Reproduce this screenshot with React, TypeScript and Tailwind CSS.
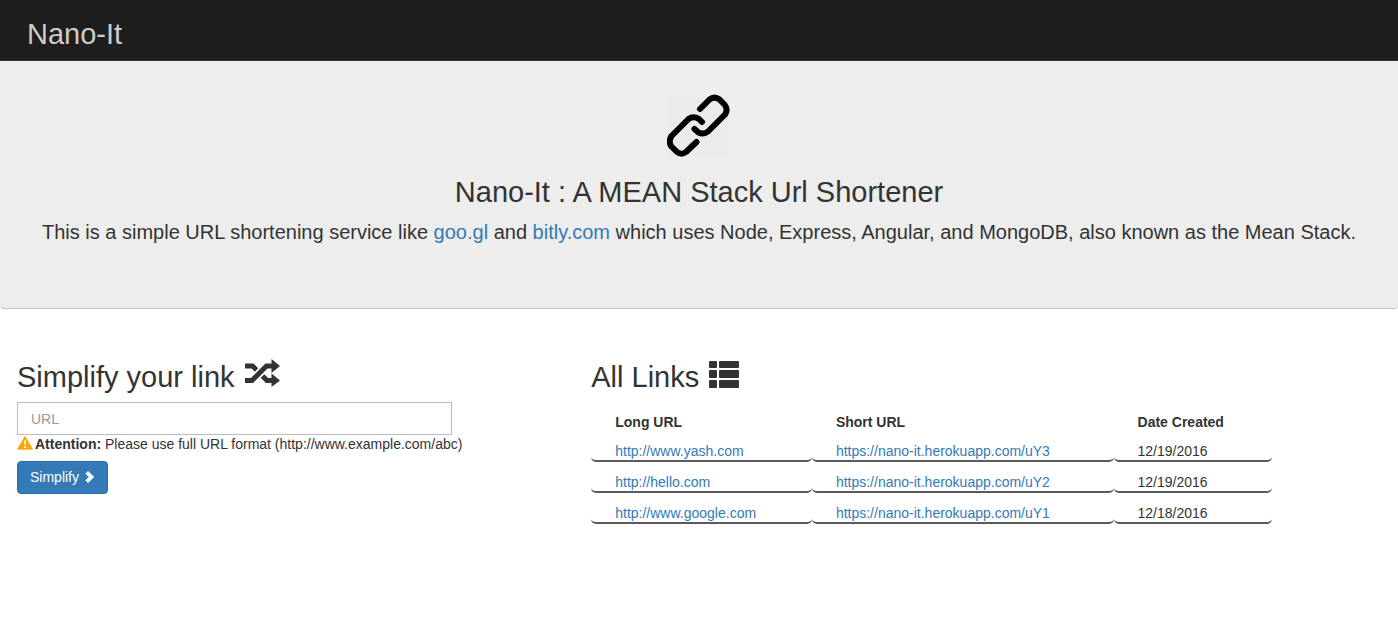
import React from "react";

type Link = { long: string; short: string; date: string };

const links: Link[] = [
  { long: "http://www.yash.com", short: "https://nano-it.herokuapp.com/uY3", date: "12/19/2016" },
  { long: "http://hello.com", short: "https://nano-it.herokuapp.com/uY2", date: "12/19/2016" },
  { long: "http://www.google.com", short: "https://nano-it.herokuapp.com/uY1", date: "12/18/2016" },
];

function ChainIcon() {
  return (
    <svg viewBox="0 0 64 64" className="h-16 w-16" fill="none" stroke="#000" strokeWidth="6" strokeLinecap="round" strokeLinejoin="round" aria-hidden="true">
      <rect x="1" y="2" width="61" height="60" fill="#ebebeb" stroke="none" />
      <path d="M33 15 L42.500 5.500 Q47.500 1.800 52.500 5.500 L57.500 10.500 Q61.500 15.500 58 20.500 L41 37.500 Q36.500 41 31.500 38.500 L27.500 35" />
      <path d="M35 28 L32 25 Q26.500 21.500 21.500 25 L4.500 42 Q1.200 47 4 52 L10 58 Q14.500 61.500 19 58 L29.500 48" />
    </svg>
  );
}

function ShuffleIcon() {
  return (
    <svg viewBox="0 0 35 28" className="h-7 w-[35px]" fill="none" stroke="#333" strokeWidth="5" aria-hidden="true">
      <path d="M0 7H7.500L11.500 11M0 21.500H7L21.500 7H28M17.500 17L22 21.500H28" />
      <path d="M26.500 0 35 7l-8.500 7zM26.500 14.500 35 21.500l-8.500 6.500z" fill="#333" stroke="none" />
    </svg>
  );
}

function ListIcon() {
  return (
    <svg viewBox="0 0 30 30" className="h-[30px] w-[30px]" fill="#333" aria-hidden="true">
      <rect x="0" y="2" width="8" height="7" rx="1" />
      <rect x="10" y="2" width="20" height="7" rx="1" />
      <rect x="0" y="11" width="8" height="8" rx="1" />
      <rect x="10" y="11" width="20" height="8" rx="1" />
      <rect x="0" y="21" width="8" height="8" rx="1" />
      <rect x="10" y="21" width="20" height="8" rx="1" />
    </svg>
  );
}

function WarningIcon() {
  return (
    <svg viewBox="0 0 16 14" className="-mt-0.5 h-3.5 w-4 shrink-0" aria-hidden="true">
      <path d="M8 0.300 15.700 13.300H0.300z" fill="#ffa500" stroke="#ffa500" strokeWidth=".6" strokeLinejoin="round" />
      <path d="M7 4.500h2l-.4 4.500H7.400zM7 10.200h2v1.800H7z" fill="#fff" />
    </svg>
  );
}

function ChevronIcon() {
  return (
    <svg viewBox="0 0 10 12" className="h-3 w-2.5" aria-hidden="true">
      <path d="M1.700 1.300 6.500 6 1.700 10.700" fill="none" stroke="#fff" strokeWidth="3.800" />
    </svg>
  );
}

const anchor = "text-[#337ab7] hover:underline";
const cell = "rounded-b-[5px] border-b-2 border-[#5a5a5a] pt-[11px] pl-6";

export default function App() {
  return (
    <div className="bg-white font-['Liberation_Sans',Arial,sans-serif] text-[14px] leading-[18px] text-[#333]">
      <header className="flex h-[61px] items-center border-b border-[#333] bg-[#1e1e1e] px-[27px] pt-2">
        <a href="#" className="text-[29px] leading-8 text-[#ccc]">Nano-It</a>
      </header>

      <section className="flex flex-col items-center rounded-b-[4px] border-b border-[#c4c4c4] bg-[#ededed] px-4 pt-[33px] pb-16 text-center">
        <ChainIcon />
        <h1 className="mt-[18px] text-[29px] leading-8">Nano-It : A MEAN Stack Url Shortener</h1>
        <p className="mt-3 text-[20px] leading-6">
          This is a simple URL shortening service like <a href="https://goo.gl" className={anchor}>goo.gl</a> and{" "}
          <a href="https://bitly.com" className={anchor}>bitly.com</a> which uses Node, Express, Angular, and MongoDB, also known as the Mean Stack.
        </p>
      </section>

      <main className="grid grid-cols-[42.100%_1fr] px-[17px] pt-[50px]">
        <form className="flex flex-col items-start" onSubmit={(e) => e.preventDefault()}>
          <h2 className="flex items-start gap-2.5 text-[29px] leading-9">Simplify your link <ShuffleIcon /></h2>
          <input aria-label="URL" placeholder="URL" className="mt-[7px] h-[33px] w-[435px] max-w-full border border-[#bbb] px-[13px] text-[14px] placeholder:text-[#999] focus:outline-[#66afe9]" />
          <p className="flex items-center gap-[2px] whitespace-nowrap">
            <WarningIcon />
            <span><strong>Attention:</strong> Please use full URL format (http://www.example.com/abc)</span>
          </p>
          <button type="submit" className="mt-2 flex h-[33px] items-center gap-1.5 rounded-[4px] border border-[#2e6da4] bg-[#337ab7] px-3 pb-0.5 text-white">
            Simplify <ChevronIcon />
          </button>
        </form>

        <section>
          <h2 className="flex items-start gap-2.5 text-[29px] leading-9">All Links <ListIcon /></h2>
          <table className="mt-[18px] w-[681px] max-w-full table-fixed border-separate border-spacing-0 text-left">
            <colgroup>
              <col className="w-[32.400%]" />
              <col className="w-[44.300%]" />
              <col />
            </colgroup>
            <thead>
              <tr>
                <th className="pl-6">Long URL</th>
                <th className="pl-6">Short URL</th>
                <th className="pl-6">Date Created</th>
              </tr>
            </thead>
            <tbody>
              {links.map((l) => (
                <tr key={l.short}>
                  <td className={cell}><a href={l.long} className={anchor}>{l.long}</a></td>
                  <td className={cell}><a href={l.short} className={anchor}>{l.short}</a></td>
                  <td className={cell}>{l.date}</td>
                </tr>
              ))}
            </tbody>
          </table>
        </section>
      </main>
    </div>
  );
}
